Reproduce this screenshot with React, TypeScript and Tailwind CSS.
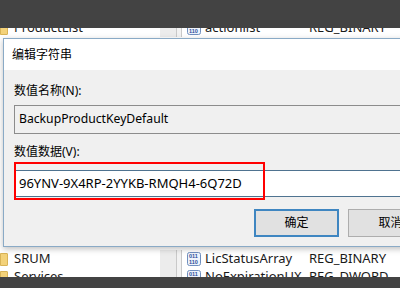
import React from "react";

const font = { fontFamily: '"Noto Sans", "Noto Sans CJK SC", sans-serif' };

function RegIcon() {
  return (
    <svg width="14" height="14" viewBox="0 0 14 14" className="shrink-0">
      <rect x="0.5" y="0.5" width="13" height="13" rx="2" fill="#eef3fb" stroke="#6f8fbf" />
      <text x="2" y="6" fontSize="5.5" fill="#2d4f9a" fontFamily="Liberation Sans, sans-serif" fontWeight="bold">011</text>
      <text x="2" y="12" fontSize="5.5" fill="#2d4f9a" fontFamily="Liberation Sans, sans-serif" fontWeight="bold">110</text>
    </svg>
  );
}

function Folder() {
  return <div className="w-[8px] h-[13px] bg-[#f3d27a] border border-[#d9b457] rounded-r-[1px] shrink-0" />;
}

function Row({ name, type, tree }: { name: string; type: string; tree?: string }) {
  return (
    <div className="flex h-[18px] items-center text-[13px] text-[#1a1a1a]">
      <div className="w-[160px] flex items-center gap-[6px] bg-white h-full">
        <Folder />
        <span>{tree}</span>
      </div>
      <div className="w-[16px] h-full bg-[#ececec]" />
      <div className="w-[6px] h-full border-l border-r border-[#c9c9c9] bg-[#f2f2f2]" />
      <div className="flex-1 flex items-center h-full bg-white pl-[5px]">
        <RegIcon />
        <span className="ml-[4px] w-[104px]">{name}</span>
        <span>{type}</span>
      </div>
    </div>
  );
}

export default function App() {
  return (
    <div className="relative w-[400px] h-[288px] overflow-hidden bg-white flex flex-col" style={font}>
      <div className="relative z-10 h-[28px] bg-[#434343] shrink-0" />
      <div className="flex-1 flex flex-col justify-between overflow-hidden">
        <div className="-mt-[9px]">
          <Row tree="ProductList" name="actionlist" type="REG_BINARY" />
        </div>
        <div>
          <Row tree="SRUM" name="LicStatusArray" type="REG_BINARY" />
          <Row tree="Services" name="NoExpirationUX" type="REG_DWORD" />
        </div>
      </div>
      <div className="relative z-10 h-[11px] bg-[#434343] shrink-0 -mt-[9px]" />

      {/* Dialog */}
      <div className="absolute z-20 left-[3px] top-[38px] w-[440px] h-[209px] border border-[#8aaac6] bg-[#f0f0f0] shadow-[0_2px_6px_rgba(0,0,0,0.25)] flex flex-col">
        <div className="h-[31px] bg-white flex items-center pl-[8px] text-[12px] text-black shrink-0">
          编辑字符串
        </div>
        <div className="flex flex-col pl-[10px] text-[12px] text-black">
          <div className="mt-[13px] leading-[16px]">数值名称(N):</div>
          <div className="mt-[6px] h-[29px] border border-[#8c8c8c] bg-[#f0f0f0] flex items-center pl-[4px] text-[12.2px]">
            BackupProductKeyDefault
          </div>
          <div className="mt-[10px] leading-[16px]">数值数据(V):</div>
          <div className="relative mt-[10px] h-[27px] border border-[#4f7390] bg-white flex items-center pl-[4px] text-[13px]">
            96YNV-9X4RP-2YYKB-RMQH4-6Q72D
            <div className="absolute left-[-1px] top-[-9px] w-[251px] h-[38px] border-2 border-[#ff0000]" />
          </div>
          <div className="mt-[12px] flex gap-[9px] pl-[240px]">
            <div className="w-[85px] h-[28px] border-2 border-[#3f86c1] bg-[#e1e1e1] flex items-center justify-center">确定</div>
            <div className="w-[85px] h-[28px] border border-[#adadad] bg-[#e1e1e1] flex items-center justify-center">取消</div>
          </div>
        </div>
      </div>
    </div>
  );
}
